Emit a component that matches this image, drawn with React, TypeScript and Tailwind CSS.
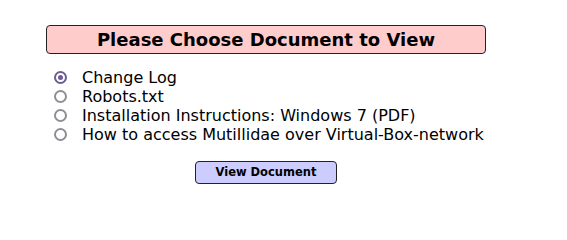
import { useState } from "react";

const docs = [
  "Change Log",
  "Robots.txt",
  "Installation Instructions: Windows 7 (PDF)",
  "How to access Mutillidae over Virtual-Box-network",
];

function Radio({ checked }: { checked: boolean }) {
  return (
    <span
      className={`flex h-[13px] w-[13px] items-center justify-center rounded-full border-2 ${
        checked ? "border-[#6d5b96]" : "border-[#8e8e96]"
      }`}
    >
      {checked && <span className="h-[5px] w-[5px] rounded-full bg-[#6d5b96]" />}
    </span>
  );
}

export default function App() {
  const [selected, setSelected] = useState(0);

  return (
    <div
      className="h-[204px] w-[567px] bg-white pl-[46px] pt-[25px] text-black"
      style={{ fontFamily: '"DejaVu Sans", sans-serif' }}
    >
      <div className="flex h-[29px] w-[440px] items-center justify-center rounded-[4px] border border-[#222] bg-[#ffcccc] text-[18px] font-bold">
        Please Choose Document to View
      </div>
      <div className="mt-[14px] flex flex-col">
        {docs.map((doc, i) => (
          <label
            key={doc}
            className="flex h-[19px] cursor-pointer items-center text-[16px]"
            onClick={() => setSelected(i)}
          >
            <span className="ml-[8px] mr-[15px]">
              <Radio checked={selected === i} />
            </span>
            {doc}
          </label>
        ))}
      </div>
      <button className="ml-[149px] mt-[17px] flex h-[23px] w-[142px] items-center justify-center rounded-[4px] border border-[#222] bg-[#ccccff] text-[11.5px] font-bold">
        View Document
      </button>
    </div>
  );
}
